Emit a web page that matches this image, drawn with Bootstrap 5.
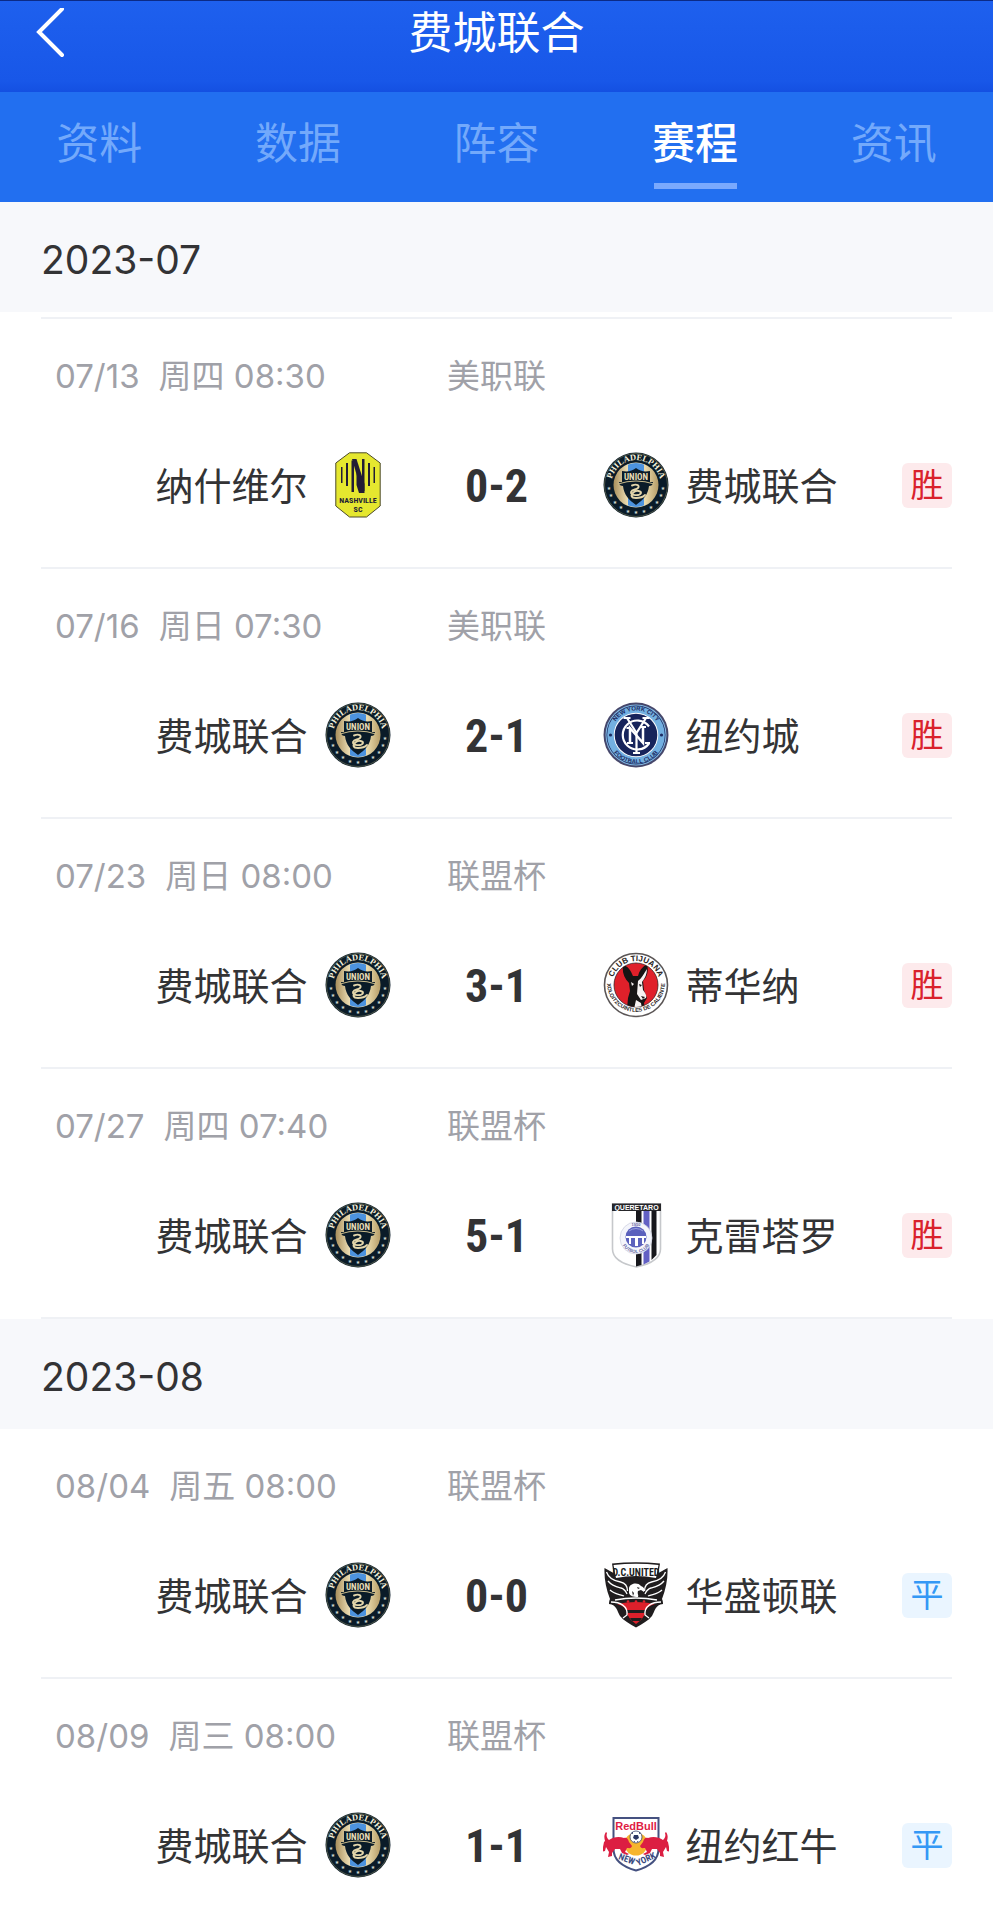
<!DOCTYPE html>
<html lang="zh-CN">
<head>
<meta charset="utf-8">
<meta name="viewport" content="width=device-width, initial-scale=1">
<title>费城联合 - 赛程</title>
<link href="https://cdn.jsdelivr.net/npm/bootstrap@5.3.0/dist/css/bootstrap.min.css" rel="stylesheet">
<style>
  body { font-family: Inter, "Noto Sans CJK SC", sans-serif; color: #333335; background: #fff; }
  .topbar { height: 92px; padding: 0 36px 28px; background: linear-gradient(#1e60ee, #1857e8 88%, #1450e2); border-top: 1px solid #0b2a86; }
  .side { flex: 1 1 0; min-width: 0; }
  .back { width: 30px; height: 50px; }
  .back svg, .crest { display: block; }
  .club { font-size: 44px; line-height: 64px; font-weight: 400; }
  .tabs { height: 110px; background: #226ff0; }
  .tabs a { flex: 1 1 0; color: #73a9fb; font-size: 43px; line-height: 60px; padding-top: 21px; }
  .tabs a.active { color: #fff; font-weight: 500; }
  .tabs a.active::after { content: ""; display: block; width: 83px; height: 6px; margin: 10px auto 0; background: #7aa9fd; }
  .month { height: 110px; padding: 0 41px; background: #f7f8fb; font-size: 39px; line-height: 116px; font-weight: 400; }
  .fixtures { padding: 0 41px; }
  .fixtures.spaced { padding-top: 5px; }
  .first-line { border-top: 2px solid #eff1f5; }
  .fixture { padding: 33px 0 49px; border-bottom: 2px solid #eff1f5; }
  .fixture.last-one { border-bottom: 0; padding-bottom: 42px; }
  .info { font-size: 33px; line-height: 48px; color: #a0a1a8; margin-bottom: 52px; }
  .when { white-space: nowrap; }
  .day { margin: 0 19px 0 14px; }
  .middle { width: 212px; flex: none; text-align: center; }
  .pair { gap: 17px; }
  .crest { width: 66px; height: 66px; flex: none; }
  .team { font-size: 38px; line-height: 63px; padding-top: 3px; white-space: nowrap; }
  .score { font-family: "Roboto Condensed", "Liberation Sans Narrow", sans-serif; font-weight: 700; font-size: 46px; line-height: 63px; padding-top: 3px; }
  .result { width: 50px; height: 45px; border-radius: 6px; font-size: 33px; line-height: 44px; text-align: center; }
  .win { color: #d9222c; background: #fdeaec; }
  .draw { color: #3498f5; background: #eaf5ff; }
</style>
</head>
<body>

<svg width="0" height="0" class="position-absolute" aria-hidden="true">
  <defs>
    <linearGradient id="gold"><stop offset="0" stop-color="#a98f5c"/><stop offset=".35" stop-color="#f3e6bd"/><stop offset=".7" stop-color="#eadbad"/><stop offset="1" stop-color="#b59c67"/></linearGradient>
    <clipPath id="disc"><circle cx="33" cy="33" r="22"/></clipPath>
    <path id="arcPhi" d="M10.500 43A24.700 24.700 0 1 1 55.500 43"/>
    <path id="arcNyTop" d="M8.500 33A24.500 24.500 0 0 1 57.500 33"/>
    <path id="arcNyBot" d="M4.500 33A28.500 28.500 0 0 0 61.500 33"/>
    <path id="arcTjTop" d="M9 33A24 24 0 0 1 57 33"/>
    <path id="arcTjBot" d="M5.400 22A29 29 0 1 0 60.600 22"/>
    <path id="arcQ" d="M18 36A15 15 0 0 0 48 36"/>

    <symbol id="philadelphia" viewBox="0 0 66 66">
      <circle cx="33" cy="33" r="32.500" fill="#0a1b28"/>
      <circle cx="33" cy="33" r="31.500" fill="none" stroke="#5d634f" stroke-width=".8"/>
      <circle cx="33" cy="33" r="22.500" fill="url(#gold)"/>
      <path clip-path="url(#disc)" d="M25 10h16v46H25z" fill="#4c93df"/>
      <path d="M33 16c4 3 8 4 14 3v11h3c0 3-2 4-4 4-1 9-6 14-13 19-7-5-12-10-13-19-2 0-4-1-4-4h3V19c6 1 10 0 14-3z" fill="#0a1b28"/>
      <path d="M15 32q18-6 36 0" fill="none" stroke="#c9bb8c" stroke-width="1"/>
      <text x="33" y="27.500" text-anchor="middle" font-family="Roboto Condensed, sans-serif" font-weight="700" font-size="9" fill="#e6dcb6">UNION</text>
      <path d="M29 33.500c5-2 8 0 6 2.500-2 2-6 1-7 4-1 4 9 4 10 1 0-2-4-3-7-1-4 3-3 6 2 6 4 0 7-1 9-3" fill="none" stroke="#e3d6ab" stroke-width="1.900" stroke-linecap="round"/>
      <text font-family="Liberation Serif" font-weight="700" font-size="8.500" fill="#f7f2dc" text-anchor="middle"><textPath href="#arcPhi" startOffset="50%">PHILADELPHIA</textPath></text>
      <g fill="#cfd6cf" font-size="5" font-family="DejaVu Sans" text-anchor="middle"><text x="6" y="38">★</text><text x="8" y="45">★</text><text x="12" y="52">★</text><text x="18" y="57">★</text><text x="25" y="61">★</text><text x="33" y="62">★</text><text x="41" y="61">★</text><text x="48" y="57">★</text><text x="54" y="52">★</text><text x="58" y="45">★</text><text x="60" y="38">★</text></g>
    </symbol>

    <symbol id="nashville" viewBox="0 0 66 66">
      <path d="M24.500 .8h17L55.200 11v43L41.500 65h-17L10.800 54V11z" fill="#e5e72f" stroke="#4c4a2c" stroke-width="1"/>
      <g fill="#221c35"><path d="M16 15h1.500v16H16zM21 11h2v23h-2zM26.500 8.500H29V40h-2.500zM37 7h2.500v32H37zM43 11h2v23h-2zM48.500 15H50v16h-1.500z"/><path d="M27 7h4.500l8 25v9h-2.500z"/></g>
      <path d="M31.500 18l5.500 17v6h-3l-2.500-8z" fill="#221c35"/>
      <g fill="#221c35" font-family="Roboto Condensed, sans-serif" font-weight="700" text-anchor="middle" font-size="8"><text x="33" y="51">NASHVILLE</text><text x="33" y="60">SC</text></g>
    </symbol>

    <symbol id="newyork" viewBox="0 0 66 66">
      <circle cx="33" cy="33" r="32.500" fill="#46476b"/>
      <circle cx="33" cy="33" r="30.500" fill="#82b9e4"/>
      <circle cx="33" cy="33" r="29.500" fill="#1d2b62"/>
      <circle cx="33" cy="33" r="28.800" fill="#73b0e1"/>
      <circle cx="33" cy="33" r="22.300" fill="#fff"/>
      <circle cx="33" cy="33" r="21.300" fill="#17245b"/>
      <g fill="none" stroke="#fff" stroke-width="2.200"><path d="M46 24.500a14.500 14.500 0 1 0 0 17"/><path d="M24 16l9.500 15M43 16l-9.500 15v20M30 51h7M20.500 16h7M39.500 16h7"/><path d="M27 41V26l13 15V25" stroke-width="2.500"/><path d="M24 41h6M23.500 26H28M37 25h6M42 41h5"/></g>
      <g font-family="Liberation Sans" font-weight="700" fill="#1d2b62" text-anchor="middle" font-size="6"><text><textPath href="#arcNyTop" startOffset="50%">NEW YORK CITY</textPath></text><text><textPath href="#arcNyBot" startOffset="50%">FOOTBALL CLUB</textPath></text></g>
      <circle cx="7.500" cy="33" r="1.600" fill="#1d2b62"/><circle cx="58.500" cy="33" r="1.600" fill="#1d2b62"/>
    </symbol>

    <symbol id="tijuana" viewBox="0 0 66 66">
      <circle cx="33" cy="33" r="31.500" fill="#fff" stroke="#5a5555" stroke-width="1.600"/>
      <circle cx="33" cy="33" r="22" fill="#e0202a" stroke="#3b2222" stroke-width=".8"/>
      <g clip-path="url(#disc)"><path d="M20 13c5 1 8 6 10 11h5c1-5 4-9 9-12 2 7 0 13-4 17l1 9 3 8-3 5 1 6H24l1-11 2-7-1-8c-5-5-7-11-6-18z" fill="#171414"/><path d="M35 29c4-3 6-8 9-12 0 5-2 9-5 13l1 8c2 3 4 5 3 8l-5 2-4-6z" fill="#f7f2f2"/><path d="M28 30l3 2-2 2zM33 48l5 3 1 6h-8z" fill="#f7f2f2"/><path d="M36 32l3 1-2 2zM38 44l4 1-2 2z" fill="#171414"/></g>
      <g font-family="Liberation Sans" font-weight="700" fill="#2a2424" text-anchor="middle"><text font-size="8"><textPath href="#arcTjTop" startOffset="50%">CLUB TIJUANA</textPath></text><text font-size="5.500"><textPath href="#arcTjBot" startOffset="50%">XOLOITZCUINTLES DE CALIENTE</textPath></text></g>
    </symbol>

    <symbol id="queretaro" viewBox="0 0 66 66">
      <path d="M9.500 2h48v45c0 10-10 15-24 18C19 62 9.500 57 9.500 47z" fill="#fff" stroke="#c6c8cb" stroke-width="1.600"/>
      <path d="M33 9h5.500v54l-5.500 1.500z" fill="#17171c"/><path d="M40.500 9h6v50.500l-6 3z" fill="#6260c4"/><path d="M48.500 9h5v44l-5 5z" fill="#17171c"/>
      <path d="M9 1.500h49V9H9z" fill="#26262a"/>
      <text x="33.500" y="8" text-anchor="middle" font-family="Liberation Sans" font-weight="700" font-size="7" fill="#fff">QUERETARO</text>
      <circle cx="33" cy="36" r="16" fill="#f4f5fb" stroke="#d1d3e2" stroke-width=".8"/>
      <circle cx="33" cy="35" r="10.500" fill="#5b61bd"/>
      <path d="M23 34h20v2h-2v6h-2v-6h-4v8h-3v-8h-4v6h-2v-6h-3z" fill="#fff"/><path d="M26 29q7-5 14 0" stroke="#9ba1df" fill="none"/>
      <text font-family="Liberation Sans" font-weight="700" font-size="4.500" fill="#6668a6" text-anchor="middle"><textPath href="#arcQ" startOffset="50%">FUTBOL CLUB</textPath></text>
      <text x="33" y="24" font-family="Liberation Sans" font-weight="700" font-size="4" fill="#6668a6" text-anchor="middle">1950</text>
    </symbol>

    <symbol id="dcunited" viewBox="0 0 66 66">
      <path d="M9 1.500Q33-1 57 1.500L55.500 11l9-5C65 16 63 27 59 37c1 2 1 4 1 5-8 1-8 7-11 12-4 5-10 8-16 11.500C27 62 21 59 17 54 14 49 14 43 6 42c0-1 0-3 1-5C3 27 1 16 1.500 6l9 5z" fill="#201d1e"/>
      <path d="M10.500 3Q33 .5 55.500 3L53 16Q33 12 13 16z" fill="#fff"/>
      <text x="33" y="13.500" text-anchor="middle" font-family="Roboto Condensed, sans-serif" font-weight="700" font-size="10" fill="#201d1e">D.C.UNITED</text>
      <path d="M14 42q19-4 38 0-8 2-10 8 0 3-4 8l-5 4-5-4q-4-5-4-8-2-6-10-8z" fill="#dd202b"/>
      <path d="M24 48h18v3H24zM27 56h12l-2 3h-8z" fill="#201d1e"/>
      <g fill="none" stroke="#fff" stroke-width="1.300"><path d="M3.500 10c2 6 8 9 14 10 5 1 7 4 7 9M5 19c4 5 9 6 13 7 4 1 5 4 6 6M7 28c4 4 9 4 14 6M62.500 10c-2 6-8 9-14 10-5 1-7 4-7 9M61 19c-4 5-9 6-13 7-4 1-5 4-6 6M59 28c-4 4-9 4-14 6M8 40c9 0 17 4 16 13l-4 3M58 40c-9 0-17 4-16 13l4 3M12 38q21-4 42 0"/></g>
      <path d="M26 26c1-5 9-6 12-2 3 1 4 3 3 6l-3-2-3 1c-1 3 1 4 0 6-5 0-8-1-9-4z" fill="#fff"/><path d="M34 25l3 1-2 1zM29 29l2 2-1 3z" fill="#201d1e"/>
      <g fill="#e1202c"><circle cx="25" cy="39.500" r="1.300"/><circle cx="33" cy="39.500" r="1.300"/><circle cx="41" cy="39.500" r="1.300"/></g>
    </symbol>

    <symbol id="redbull" viewBox="0 0 66 66">
      <path d="M10.500 6h45v31c0 12-10 18-22.500 21.500C20.500 55 10.500 49 10.500 37z" fill="#fff" stroke="#455180" stroke-width="2"/>
      <text x="33" y="18" text-anchor="middle" font-family="Liberation Sans" font-weight="700" font-size="11" fill="#df1c43">RedBull</text>
      <circle cx="33" cy="32" r="11.500" fill="#f6b52e"/>
      <g id="bull" fill="#dc1e42"><path d="M2 29c-1-4-1-6 1-9l1 1c-1 3 0 5 2 7 4-3 10-4 15-2 3-1 4 1 5 4l3 4c-1 3-3 2-5 2l-2 4 4 2-2 1-5-2-2-4-5 0-3 4 0 3-4 1 1-5-3-5-1 4-4 1-1-1 3-4 1-5z"/></g>
      <use href="#bull" transform="matrix(-1 0 0 1 66 0)"/>
      <circle cx="33" cy="25" r="6" fill="#fff" stroke="#3a456f" stroke-width=".8"/><path d="M31 23h4l1 3-3 2-3-2zM28 21l2-1v2zM38 21l-2-1v2zM30 30l2-1v1zM36 30l-2-1v1z" fill="#2c3765"/>
      <g font-family="Roboto Condensed, sans-serif" font-weight="700" font-size="9" fill="#3b4a80"><text transform="translate(15 47) rotate(20)">NEW</text><text transform="translate(35 54) rotate(-24)">YORK</text></g>
    </symbol>
  </defs>
</svg>

<header class="topbar d-flex align-items-center text-white">
  <div class="side">
    <button type="button" class="back btn p-0 border-0 d-block" aria-label="返回">
      <svg width="30" height="50" viewBox="0 0 30 50" fill="none" stroke="#fff" stroke-width="4" stroke-linecap="round" aria-hidden="true"><path d="M26 1L3 24l23 23"/></svg>
    </button>
  </div>
  <h1 class="club m-0">费城联合</h1>
  <div class="side"></div>
</header>

<nav class="tabs d-flex text-center" aria-label="球队栏目">
  <a href="#info" class="text-decoration-none">资料</a>
  <a href="#stats" class="text-decoration-none">数据</a>
  <a href="#squad" class="text-decoration-none">阵容</a>
  <a href="#schedule" class="text-decoration-none active" aria-current="page">赛程</a>
  <a href="#news" class="text-decoration-none">资讯</a>
</nav>

<main id="schedule">
  <h2 class="month m-0">2023-07</h2>
  <div class="fixtures spaced">
    <ul class="list-unstyled m-0 first-line">
      <li class="fixture">
        <div class="info d-flex"><div class="side when"><span class="day">07/13</span><span>周四 08:30</span></div><div class="middle">美职联</div><div class="side"></div></div>
        <div class="d-flex align-items-center">
          <div class="side pair d-flex justify-content-end"><span class="team">纳什维尔</span><svg class="crest" aria-hidden="true"><use href="#nashville"/></svg></div>
          <div class="middle score">0-2</div>
          <div class="side pair d-flex align-items-center"><svg class="crest" aria-hidden="true"><use href="#philadelphia"/></svg><span class="team">费城联合</span><span class="result win ms-auto">胜</span></div>
        </div>
      </li>
      <li class="fixture">
        <div class="info d-flex"><div class="side when"><span class="day">07/16</span><span>周日 07:30</span></div><div class="middle">美职联</div><div class="side"></div></div>
        <div class="d-flex align-items-center">
          <div class="side pair d-flex justify-content-end"><span class="team">费城联合</span><svg class="crest" aria-hidden="true"><use href="#philadelphia"/></svg></div>
          <div class="middle score">2-1</div>
          <div class="side pair d-flex align-items-center"><svg class="crest" aria-hidden="true"><use href="#newyork"/></svg><span class="team">纽约城</span><span class="result win ms-auto">胜</span></div>
        </div>
      </li>
      <li class="fixture">
        <div class="info d-flex"><div class="side when"><span class="day">07/23</span><span>周日 08:00</span></div><div class="middle">联盟杯</div><div class="side"></div></div>
        <div class="d-flex align-items-center">
          <div class="side pair d-flex justify-content-end"><span class="team">费城联合</span><svg class="crest" aria-hidden="true"><use href="#philadelphia"/></svg></div>
          <div class="middle score">3-1</div>
          <div class="side pair d-flex align-items-center"><svg class="crest" aria-hidden="true"><use href="#tijuana"/></svg><span class="team">蒂华纳</span><span class="result win ms-auto">胜</span></div>
        </div>
      </li>
      <li class="fixture">
        <div class="info d-flex"><div class="side when"><span class="day">07/27</span><span>周四 07:40</span></div><div class="middle">联盟杯</div><div class="side"></div></div>
        <div class="d-flex align-items-center">
          <div class="side pair d-flex justify-content-end"><span class="team">费城联合</span><svg class="crest" aria-hidden="true"><use href="#philadelphia"/></svg></div>
          <div class="middle score">5-1</div>
          <div class="side pair d-flex align-items-center"><svg class="crest" aria-hidden="true"><use href="#queretaro"/></svg><span class="team">克雷塔罗</span><span class="result win ms-auto">胜</span></div>
        </div>
      </li>
    </ul>
  </div>

  <h2 class="month m-0">2023-08</h2>
  <div class="fixtures">
    <ul class="list-unstyled m-0">
      <li class="fixture">
        <div class="info d-flex"><div class="side when"><span class="day">08/04</span><span>周五 08:00</span></div><div class="middle">联盟杯</div><div class="side"></div></div>
        <div class="d-flex align-items-center">
          <div class="side pair d-flex justify-content-end"><span class="team">费城联合</span><svg class="crest" aria-hidden="true"><use href="#philadelphia"/></svg></div>
          <div class="middle score">0-0</div>
          <div class="side pair d-flex align-items-center"><svg class="crest" aria-hidden="true"><use href="#dcunited"/></svg><span class="team">华盛顿联</span><span class="result draw ms-auto">平</span></div>
        </div>
      </li>
      <li class="fixture last-one">
        <div class="info d-flex"><div class="side when"><span class="day">08/09</span><span>周三 08:00</span></div><div class="middle">联盟杯</div><div class="side"></div></div>
        <div class="d-flex align-items-center">
          <div class="side pair d-flex justify-content-end"><span class="team">费城联合</span><svg class="crest" aria-hidden="true"><use href="#philadelphia"/></svg></div>
          <div class="middle score">1-1</div>
          <div class="side pair d-flex align-items-center"><svg class="crest" aria-hidden="true"><use href="#redbull"/></svg><span class="team">纽约红牛</span><span class="result draw ms-auto">平</span></div>
        </div>
      </li>
    </ul>
  </div>
</main>

<script src="https://cdn.jsdelivr.net/npm/bootstrap@5.3.0/dist/js/bootstrap.bundle.min.js"></script>
</body>
</html>
